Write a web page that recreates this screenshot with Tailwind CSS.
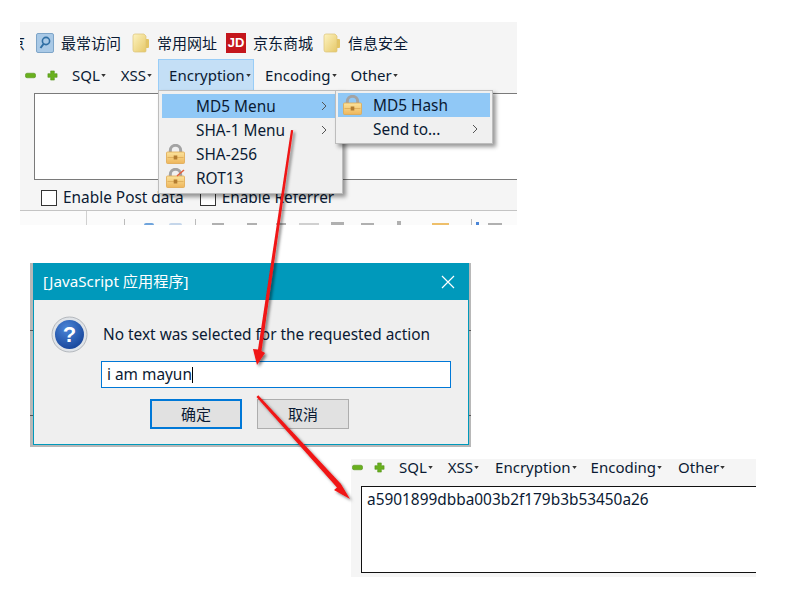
<!DOCTYPE html>
<html lang="zh-CN">
<head>
  <meta charset="UTF-8" />
  <title>HackBar Encryption</title>
  <script src="https://cdn.jsdelivr.net/npm/@tailwindcss/browser@4"></script>
</head>
<body class="bg-white">
  <svg width="0" height="0" class="absolute">
    <defs>
      <linearGradient id="lockBody" x1="0" y1="0" x2="0" y2="1">
        <stop offset="0" stop-color="#fbe39c" />
        <stop offset="1" stop-color="#eeb65c" />
      </linearGradient>
      <linearGradient id="folder" x1="0" y1="0" x2="1" y2="1">
        <stop offset="0" stop-color="#fdf3c0" />
        <stop offset="1" stop-color="#e6c868" />
      </linearGradient>
      <radialGradient id="helpBall" cx="0.4" cy="0.3" r="0.8">
        <stop offset="0" stop-color="#4b86d8" />
        <stop offset="1" stop-color="#123f95" />
      </radialGradient>
      <symbol id="lock" viewBox="0 0 19 20">
        <path d="M4.300 9V6.500a5.200 5.200 0 0 1 10.400 0V9" fill="none" stroke="#a3a3a3" stroke-width="3" />
        <rect x="0.500" y="8" width="18" height="11.500" rx="1" fill="url(#lockBody)" stroke="#e0a850" stroke-width="0.800" />
        <path d="M1.500 13.500h16" stroke="#dcaa58" stroke-width="0.800" />
        <rect x="7.700" y="11.500" width="3.600" height="4" fill="#b27c30" />
      </symbol>
      <symbol id="folderIcon" viewBox="0 0 18 20">
        <path d="M1 3a2 2 0 0 1 2-2h9l2 2v15a1 1 0 0 1-1 1H3a2 2 0 0 1-2-2z" fill="url(#folder)" stroke="#dcc478" stroke-width="0.7" />
        <path d="M14 6h2a1 1 0 0 1 1 1v7a1 1 0 0 1-1 1h-2z" fill="#e3c566" />
      </symbol>
      <symbol id="minus" viewBox="0 0 12 12">
        <rect x="0.5" y="3.5" width="11" height="5" rx="1.8" fill="#69b01e" stroke="#4f8f14" stroke-width="0.6" />
      </symbol>
      <symbol id="plus" viewBox="0 0 12 12">
        <path d="M4 1h4v3h3v4H8v3H4V8H1V4h3z" fill="#69b01e" stroke="#4f8f14" stroke-width="0.6" stroke-linejoin="round" />
      </symbol>
      <symbol id="caret" viewBox="0 0 6 4">
        <path d="M0 0h6L3 4z" fill="#333" />
      </symbol>
      <symbol id="chev" viewBox="0 0 6 10">
        <path d="M1 1l4 4-4 4" fill="none" stroke="#555" stroke-width="1" />
      </symbol>
    </defs>
  </svg>

  <div class="relative w-[800px] h-[600px] overflow-hidden text-[15px] text-[#0a1a33] font-['Noto_Sans','Noto_Sans_CJK_SC',sans-serif]">

    <!-- top browser crop -->
    <div class="absolute left-[20px] top-[22px] w-[497px] h-[203px] overflow-hidden bg-[#f5f5f5] flex flex-col">
      <div class="h-[36px] shrink-0 flex items-center text-[15px] pt-[6px] relative">
        <span class="w-[5px] overflow-hidden flex justify-end mr-[11px]"><span class="shrink-0">京</span></span>
        <svg width="18" height="20" viewBox="0 0 18 20" class="mr-[7px]">
          <rect x="0.5" y="0.5" width="17" height="19" rx="1.5" fill="#a9c9e6" stroke="#7ea5c8" />
          <circle cx="10" cy="8" r="3.6" fill="none" stroke="#2f6ea3" stroke-width="1.6" />
          <path d="M7.5 11l-3 4" stroke="#2f6ea3" stroke-width="2" />
        </svg>
        <span class="mr-[11px]">最常访问</span>
        <svg width="18" height="20" class="mr-[7px]"><use href="#folderIcon" /></svg>
        <span class="mr-[9px]">常用网址</span>
        <span class="w-[20px] h-[20px] bg-[#c4161c] text-white text-[13px] font-bold leading-[20px] text-center mr-[7px] font-['Liberation_Sans']">JD</span>
        <span class="mr-[10px]">京东商城</span>
        <svg width="18" height="20" class="mr-[7px]"><use href="#folderIcon" /></svg>
        <span>信息安全</span>
      </div>
      <div class="h-[35px] shrink-0 flex items-center pl-[5px] pb-[1px]">
        <svg width="11" height="11" class="mr-[11px]"><use href="#minus" /></svg>
        <svg width="11" height="11" class="mr-[14px]"><use href="#plus" /></svg>
        <span class="flex items-center mr-[15px]">SQL<svg width="5" height="3" class="ml-[1px]"><use href="#caret" /></svg></span>
        <span class="flex items-center mr-[6px]">XSS<svg width="5" height="3" class="ml-[1px]"><use href="#caret" /></svg></span>
        <span class="flex items-center w-[96px] h-[32px] pl-[10px] bg-[#c4dff6] border border-[#99cdf7] mr-[11px]">Encryption<svg width="5" height="3" class="ml-[1px]"><use href="#caret" /></svg></span>
        <span class="flex items-center mr-[14px]">Encoding<svg width="5" height="3" class="ml-[1px]"><use href="#caret" /></svg></span>
        <span class="flex items-center">Other<svg width="5" height="3" class="ml-[1px]"><use href="#caret" /></svg></span>
      </div>
      <div class="ml-[14px] h-[87px] shrink-0 bg-white border border-[#7a7a7a] border-r-0"></div>
      <div class="h-[30px] shrink-0 flex items-center pl-[21px] pt-[6px] text-[15.4px]">
        <span class="w-[16px] h-[16px] border border-[#333] bg-white mr-[6px]"></span>
        <span class="mr-[16px]">Enable Post data</span>
        <span class="w-[16px] h-[16px] border border-[#333] bg-white mr-[6px]"></span>
        <span>Enable Referrer</span>
      </div>
      <!-- clipped formatting toolbar, only the top of each button shows -->
      <div class="flex-1 border-t border-[#c4c4c4] flex bg-[#fbfbfb]">
        <div class="w-[67px] border-r border-[#d0d0d0]"></div>
        <div class="flex-1 flex items-end overflow-hidden">
          <span class="w-[38px] h-[6px] border-r border-[#bbb]"></span>
          <span class="ml-[19px] w-[10px] h-[2px] bg-[#6fa4dc] rounded-t-full"></span>
          <span class="ml-[15px] w-[13px] h-[2px] bg-[#c5d6ea] rounded-t-full"></span>
          <span class="ml-[0px] w-[14px] h-[6px] border-r border-[#bbb]"></span>
          <span class="ml-[16px] w-[12px] h-[2px] bg-[#b0b0b0]"></span>
          <span class="ml-[23px] w-[10px] h-[2px] bg-[#b0b0b0]"></span>
          <span class="ml-[19px] w-[10px] h-[2px] bg-[#b0b0b0]"></span>
          <span class="ml-[13px] w-[20px] h-[2px] bg-[#d0d0d0]"></span>
          <span class="ml-[12px] w-[13px] h-[3px] bg-[#b0b0b0]"></span>
          <span class="ml-[17px] w-[13px] h-[2px] bg-[#b0b0b0]"></span>
          <span class="ml-[23px] w-[4px] h-[4px] bg-[#b0b0b0]"></span>
          <span class="ml-[31px] w-[17px] h-[2px] bg-[#eebf6a]"></span>
          <span class="ml-[0px] w-[23px] h-[6px] border-r border-[#bbb]"></span>
          <span class="ml-[4px] w-[3px] h-[3px] bg-[#4b86d8]"></span>
          <span class="ml-[9px] w-[14px] h-[2px] bg-[#b0b0b0]"></span>
        </div>
      </div>
    </div>

    <!-- encryption menu -->
    <div class="absolute left-[158px] top-[90px] w-[185px] h-[104px] bg-[#f0f0f0] border border-[#bdbdbd] shadow-[3px_3px_4px_rgba(0,0,0,0.4)] py-[3px] pl-[3px] pr-[3px] text-[15.4px]">
      <div class="h-[24px] flex items-center justify-between bg-[#90c8f6] pl-[34px] pr-[12px]"><span class="pt-[2px]">MD5 Menu</span><svg width="6" height="10"><use href="#chev" /></svg></div>
      <div class="h-[24px] flex items-center justify-between pl-[34px] pr-[12px]"><span class="pt-[2px]">SHA-1 Menu</span><svg width="6" height="10"><use href="#chev" /></svg></div>
      <div class="h-[24px] flex items-center pl-[4px]"><svg width="19" height="20" class="mr-[11px]"><use href="#lock" /></svg><span class="pt-[2px]">SHA-256</span></div>
      <div class="h-[24px] flex items-center pl-[4px]"><svg width="19" height="20" class="mr-[11px]"><use href="#lock" /><path d="M11 8l7-6" stroke="#e2603c" stroke-width="1.6" /></svg><span class="pt-[2px]">ROT13</span></div>
    </div>

    <!-- md5 submenu -->
    <div class="absolute left-[335px] top-[90px] w-[158px] h-[54px] bg-[#f0f0f0] border border-[#bdbdbd] shadow-[3px_3px_4px_rgba(0,0,0,0.4)] p-[2px] text-[15.4px]">
      <div class="h-[24px] flex items-center bg-[#90c8f6] pl-[5px]"><svg width="19" height="20" class="mr-[11px]"><use href="#lock" /></svg><span class="pt-[2px]">MD5 Hash</span></div>
      <div class="h-[24px] flex items-center justify-between pl-[35px] pr-[12px]"><span class="pt-[2px]">Send to...</span><svg width="6" height="10"><use href="#chev" /></svg></div>
    </div>

    <!-- prompt dialog -->
    <div class="absolute left-[30px] top-[263px] w-[441px] h-[184px] bg-[#b8b8b8] pl-[3px] pr-[2px] pb-[2px]">
      <span class="absolute left-0 top-[67px] w-[3px] h-px bg-[#555]"></span>
      <span class="absolute left-0 top-[152px] w-[3px] h-px bg-[#555]"></span>
      <span class="absolute right-0 top-[67px] w-[2px] h-px bg-[#555]"></span>
      <span class="absolute right-0 top-[152px] w-[2px] h-px bg-[#555]"></span>
      <div class="h-full bg-[#efefef] border border-[#0099bb] border-t-0 flex flex-col">
        <div class="h-[37px] shrink-0 bg-[#0099bb] -mx-px flex items-center justify-between pl-[10px] pr-[14px] text-white text-[15.2px]">
          <span>[JavaScript 应用程序]</span>
          <svg width="14" height="14" viewBox="0 0 14 14"><path d="M1 1l12 12M13 1L1 13" stroke="#fff" stroke-width="1.2" /></svg>
        </div>
        <div class="flex items-center h-[36px] mt-[16px] pl-[17px] shrink-0">
          <svg width="37" height="37" viewBox="0 0 37 37" class="mr-[15px]">
            <circle cx="18.5" cy="18.5" r="17.5" fill="#dfe3e8" stroke="#b4b8bd" />
            <circle cx="18.5" cy="18.5" r="14.5" fill="url(#helpBall)" />
            <text x="18.5" y="26" text-anchor="middle" font-size="22" font-weight="700" fill="#fff" font-family="Liberation Sans">?</text>
          </svg>
          <span class="text-[15.4px] pt-[2px]">No text was selected for the requested action</span>
        </div>
        <div class="mt-[9px] ml-[67px] w-[350px] h-[27px] shrink-0 bg-white border border-[#0078d7] flex items-center pl-[5px] text-[15.4px]">i am mayun<span class="w-px h-[16px] bg-black"></span></div>
        <div class="mt-[11px] ml-[116px] flex gap-[15px] text-[15px]">
          <div class="w-[92px] h-[30px] bg-[#e1e1e1] border-2 border-[#0078d7] flex items-center justify-center">确定</div>
          <div class="w-[92px] h-[30px] bg-[#e1e1e1] border border-[#adadad] flex items-center justify-center">取消</div>
        </div>
      </div>
    </div>

    <!-- result crop -->
    <div class="absolute left-[351px] top-[459px] w-[405px] h-[118px] bg-[#f5f5f5] flex flex-col">
      <div class="h-[27px] shrink-0 flex items-center pl-[1px] pb-[11px]">
        <svg width="11" height="11" class="mr-[11px]"><use href="#minus" /></svg>
        <svg width="11" height="11" class="mr-[14px]"><use href="#plus" /></svg>
        <span class="flex items-center mr-[15px]">SQL<svg width="5" height="3" class="ml-[1px]"><use href="#caret" /></svg></span>
        <span class="flex items-center mr-[16px]">XSS<svg width="5" height="3" class="ml-[1px]"><use href="#caret" /></svg></span>
        <span class="flex items-center mr-[14px]">Encryption<svg width="5" height="3" class="ml-[1px]"><use href="#caret" /></svg></span>
        <span class="flex items-center mr-[16px]">Encoding<svg width="5" height="3" class="ml-[1px]"><use href="#caret" /></svg></span>
        <span class="flex items-center">Other<svg width="5" height="3" class="ml-[1px]"><use href="#caret" /></svg></span>
      </div>
      <div class="ml-[10px] h-[87px] bg-white border border-[#111] border-r-0 pl-[5px] pt-px text-[15.4px]">a5901899dbba003b2f179b3b53450a26</div>
    </div>

    <!-- red annotation arrows -->
    <svg class="absolute left-0 top-0 pointer-events-none" width="800" height="600" viewBox="0 0 800 600">
      <defs>
        <filter id="arrowShadow" x="-20%" y="-20%" width="140%" height="140%">
          <feDropShadow dx="2" dy="2" stdDeviation="1.6" flood-color="#000" flood-opacity="0.5" />
        </filter>
      </defs>
      <g filter="url(#arrowShadow)" fill="#f01414">
        <path d="M291 130l2.200 .3L261.500 351l3.500 2-8 12-4-16 5 .5z" />
        <path d="M256.500 397l1.800-1.800L340.500 483.500l-.5-1 10 16.500-16-9 3-2.500z" />
      </g>
    </svg>
  </div>
</body>
</html>
